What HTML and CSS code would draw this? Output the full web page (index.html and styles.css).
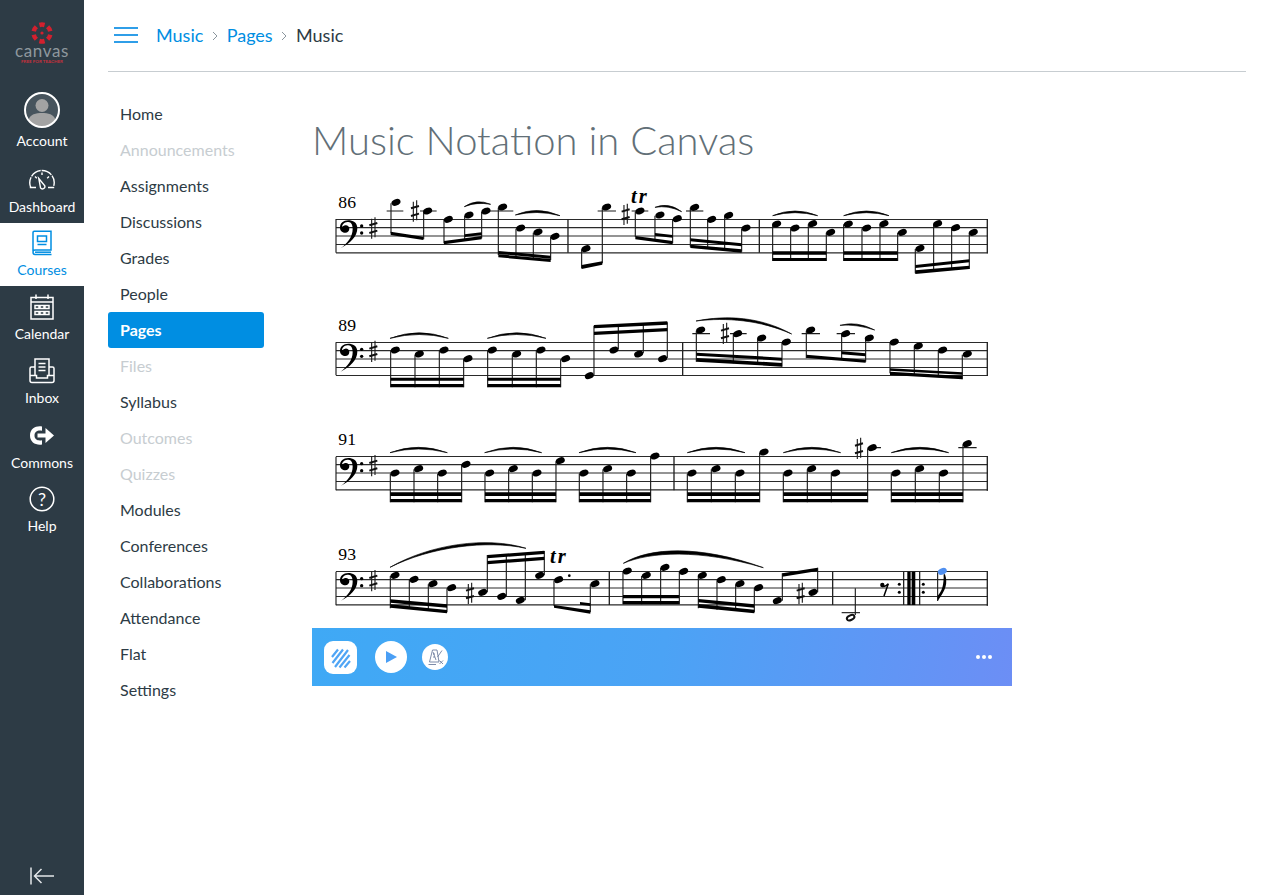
FILE: index.html
```html
<!DOCTYPE html>
<html lang="en">
<head>
  <meta charset="UTF-8">
  <title>Music Notation in Canvas</title>
  <link rel="stylesheet" href="styles.css">
</head>
<body>
  <div class="app">
    <nav class="global-nav">
      <div class="logo">
        <svg class="logo-mark" viewBox="-11 -11 22 22">
          <g fill="#d3202e">
            <circle r="1.6"/>
            <path id="logoPetal" d="M-3.2 -10.2A10.6 10.6 0 0 1 3.2 -10.2L2 -5.8A5 5 0 0 0 -2 -5.8Z"/>
            <use href="#logoPetal" transform="rotate(60)"/>
            <use href="#logoPetal" transform="rotate(120)"/>
            <use href="#logoPetal" transform="rotate(180)"/>
            <use href="#logoPetal" transform="rotate(240)"/>
            <use href="#logoPetal" transform="rotate(300)"/>
          </g>
        </svg>
        <div class="logo-word">canvas</div>
        <div class="logo-sub">FREE FOR TEACHER</div>
      </div>

      <a class="nav-item account">
        <svg class="avatar" viewBox="0 0 36 36">
          <circle cx="18" cy="18" r="17" fill="#47545d"/>
          <circle cx="18" cy="13.5" r="6.5" fill="#a3a3a3"/>
          <path d="M4.5 28C6 22 12 21 18 21S30 22 31.5 28A17 17 0 0 1 4.5 28Z" fill="#a3a3a3"/>
          <circle cx="18" cy="18" r="17" fill="none" stroke="#fff" stroke-width="2"/>
        </svg>
        <span>Account</span>
      </a>
      <a class="nav-item">
        <svg class="icon" viewBox="0 0 26 26" fill="none" stroke="#fff" stroke-width="1.4">
          <path d="M0.8 20.5H7M19 20.5H25.2"/>
          <path d="M1.8 20.5A12.2 12.2 0 1 1 24.2 20.5" stroke-dasharray="10.5 1 11 1 11 1 10.5"/>
          <path d="M6 9.5L7.8 11.2M13 5.5V8M20 9.5L18.2 11.2"/>
          <path d="M9.8 11.5L15.8 18.8A2.4 2.4 0 0 1 11.5 20.8Z"/>
        </svg>
        <span>Dashboard</span>
      </a>
      <a class="nav-item active">
        <svg class="icon" viewBox="0 0 26 26" fill="none" stroke="#008ee2" stroke-width="1.5">
          <path d="M4 21V2.5C4 1.8 4.5 1.3 5.2 1.3H22V20H6C4.8 20 4 20.6 4 22S4.8 24.5 6 24.5H22.5"/>
          <path d="M6 22.2H22"/>
          <path d="M8.5 6H17.5V11.5H8.5ZM8.5 14.5H17.5"/>
        </svg>
        <span>Courses</span>
      </a>
      <a class="nav-item">
        <svg class="icon" viewBox="0 0 26 26" fill="none" stroke="#fff" stroke-width="1.5">
          <path d="M2 3.5H24V25H2ZM2 8H24M7 0.5V5M19 0.5V5"/>
          <path d="M6 11.5H10V14.5H6ZM11 11.5H15V14.5H11ZM16 11.5H20V14.5H16ZM6 17.5H10V20.5H6ZM11 17.5H15V20.5H11ZM16 17.5H20V20.5H16Z"/>
        </svg>
        <span>Calendar</span>
      </a>
      <a class="nav-item">
        <svg class="icon" viewBox="0 0 26 26" fill="none" stroke="#fff" stroke-width="1.5">
          <path d="M6 17V1H20V17"/>
          <path d="M9.5 5.5H16.5M9.5 9H16.5M9.5 12.5H16.5"/>
          <path d="M6 9H2.5C1.5 9 1 9.8 1 10.5V22.5C1 23.8 2 24.5 3 24.5H23C24 24.5 25 23.8 25 22.5V10.5C25 9.8 24.5 9 23.5 9H20M1 17.5H7.5V20H18.5V17.5H25"/>
        </svg>
        <span>Inbox</span>
      </a>
      <a class="nav-item commons">
        <svg class="icon" viewBox="0 0 26 26" fill="#fff">
          <path d="M13 3.5C7 2.5 1 5.5 1 12.5S7 22.5 13 21.5V17.2C9 18.1 5.5 16.5 5.5 12.5S9 6.9 13 7.8Z"/>
          <path d="M8.5 10.4H16.5V5L25 12.5L16.5 20V14.6H8.5Z"/>
        </svg>
        <span>Commons</span>
      </a>
      <a class="nav-item">
        <svg class="icon" viewBox="0 0 26 26">
          <circle cx="13" cy="13" r="11.8" fill="none" stroke="#fff" stroke-width="1.5"/>
          <text class="help-mark" x="13" y="19.5">?</text>
        </svg>
        <span>Help</span>
      </a>

      <a class="collapse">
        <svg viewBox="0 0 26 20" width="26" height="20" fill="none" stroke="#e4e7e9" stroke-width="1.5">
          <path d="M2 1.5V18.5M25 10H5.5M12.5 3L5.5 10L12.5 17"/>
        </svg>
      </a>
    </nav>

    <div class="main">
      <header class="topbar">
        <div class="hamburger"><i></i><i></i><i></i></div>
        <a class="crumb">Music</a>
        <svg class="crumb-sep" viewBox="0 0 6 10" width="6" height="10"><path d="M1 1L5 5L1 9" fill="none" stroke="#8b969e"/></svg>
        <a class="crumb">Pages</a>
        <svg class="crumb-sep" viewBox="0 0 6 10" width="6" height="10"><path d="M1 1L5 5L1 9" fill="none" stroke="#8b969e"/></svg>
        <span class="crumb-current">Music</span>
      </header>

      <div class="body-row">
        <ul class="course-nav">
          <li>Home</li>
          <li class="off">Announcements</li>
          <li>Assignments</li>
          <li>Discussions</li>
          <li>Grades</li>
          <li>People</li>
          <li class="current">Pages</li>
          <li class="off">Files</li>
          <li>Syllabus</li>
          <li class="off">Outcomes</li>
          <li class="off">Quizzes</li>
          <li>Modules</li>
          <li>Conferences</li>
          <li>Collaborations</li>
          <li>Attendance</li>
          <li>Flat</li>
          <li>Settings</li>
        </ul>

        <main class="page">
          <h1 class="page-title">Music Notation in Canvas</h1>

          <svg class="score" viewBox="312 178 700 450" width="700" height="450">
            <defs>
              <ellipse id="n" rx="14" ry="9.5" transform="rotate(-22)"/>
              <g id="sh">
                <path class="st" d="M-5 -28V32M5 -32V28"/>
                <path class="thick" d="M-12 -8L12 -15M-12 15L12 8"/>
              </g>
              <g id="cl">
                <path d="M32 88C60 73 82 53 82 28C82 10 68 4 55 4C40 4 30 13 30 26C30 36 38 41 46 41C53 41 58 36 58 29C58 22 52 18 46 19C42 20 38 23 36 23C38 13 46 9 55 9C64 9 68 18 68 30C68 53 52 73 32 88Z"/>
                <circle cx="95" cy="21" r="5"/>
                <circle cx="95" cy="42" r="5"/>
                <use href="#sh" x="130" y="27"/>
              </g>
            </defs>

            <path class="lines" d="M336 219.5H988M336 227.7H988M336 236H988M336 244.5H988M336 252.8H988"/>
            <path class="lines" d="M336 342.5H988M336 350.7H988M336 359H988M336 367.5H988M336 375.5H988"/>
            <path class="lines" d="M336 456.5H988M336 464.7H988M336 473H988M336 481.5H988M336 489.8H988"/>
            <path class="lines" d="M336 571.5H988M336 579.7H988M336 588H988M336 596.5H988M336 604.8H988"/>

            <!-- bar 86 -->
            <g transform="translate(330 185) scale(.3333)">
              <text class="mm" x="25" y="68">86</text>
              <use href="#cl" y="102"/>
              <path class="st" d="M18 102V203M183 55V145M281 80V163M342 105V175M404 92V165M455 80V160M505 68V210M558 131V215M610 143V220M662 156V225M755 193V250M817 68V235M916 80V155M975 92V165M1028 103V175"/>
              <path class="st" d="M170 78H220M270 78H320M480 78H550M803 78H858M905 78H955"/>
              <path class="bar" d="M714 102V203"/>
              <path d="M182 140L280 155V165L182 150ZM342 168L455 153V163L342 178ZM404 148L455 142V150L404 156ZM505 198L662 212V221L505 207ZM505 208L662 222V231L505 217ZM755 240L817 229V239L755 252ZM916 153L1028 168V178L916 163ZM975 144L1028 150V158L975 152Z"/>
              <path class="slur" d="M403 65Q440 40 482 58Q440 50 403 65ZM556 90Q620 62 690 92Q620 74 556 90ZM975 67Q1015 50 1055 80Q1015 60 975 67Z"/>
              <use href="#n" x="198" y="52"/><use href="#n" x="293" y="78"/><use href="#n" x="355" y="103"/>
              <use href="#n" x="417" y="90"/><use href="#n" x="468" y="78"/><use href="#n" x="518" y="66"/>
              <use href="#n" x="572" y="129"/><use href="#n" x="624" y="141"/><use href="#n" x="675" y="154"/>
              <use href="#n" x="768" y="191"/><use href="#n" x="830" y="66"/><use href="#n" x="930" y="78"/><use href="#n" x="990" y="90"/>
              <use href="#sh" x="255" y="78"/><use href="#sh" x="887" y="88"/>
              <text class="tr" x="903" y="54">tr</text>
            </g>
            <g transform="translate(660 185) scale(.3333)">
              <path class="st" d="M91 68V185M143 105V190M194 92V195M245 131V200M338 118V228M392 130V228M445 118V228M499 143V228M551 118V228M606 130V228M660 118V228M713 143V228M766 192V265M821 118V258M875 130V255M928 144V252"/>
              <path class="st" d="M78 78H130"/>
              <path class="bar" d="M298 102V203"/><path class="bar" d="M982 102V205"/>
              <path d="M91 160L245 175V184L91 169ZM91 179L245 193V203L91 189ZM338 199H499V209H338ZM338 219H499V228H338ZM551 199H713V209H551ZM551 219H713V228H551ZM766 240L928 223V232L766 249ZM766 256L928 242V252L766 267Z"/>
              <path class="slur" d="M338 92Q405 64 473 92Q405 74 338 92ZM551 92Q620 64 687 92Q620 74 551 92Z"/>
              <use href="#n" x="52" y="101"/><use href="#n" x="104" y="67"/><use href="#n" x="155" y="103"/><use href="#n" x="206" y="91"/><use href="#n" x="258" y="129"/>
              <use href="#n" x="350" y="117"/><use href="#n" x="405" y="129"/><use href="#n" x="458" y="116"/><use href="#n" x="512" y="142"/>
              <use href="#n" x="565" y="117"/><use href="#n" x="620" y="129"/><use href="#n" x="672" y="116"/><use href="#n" x="727" y="142"/>
              <use href="#n" x="780" y="190"/><use href="#n" x="833" y="116"/><use href="#n" x="887" y="128"/><use href="#n" x="940" y="142"/>
            </g>

            <!-- bar 89 -->
            <g transform="translate(330 310) scale(.3333)">
              <text class="mm" x="25" y="62">89</text>
              <use href="#cl" y="97"/>
              <path class="st" d="M18 97V196M182 122V232M255 134V232M328 122V232M401 148V232M473 122V232M547 134V232M619 122V232M692 148V232M792 195V47M865 118V45M940 130V45M1012 144V37"/>
              <path d="M182 203H401V212H182ZM182 222H401V232H182ZM473 203H692V212H473ZM473 222H692V232H473ZM792 45L1012 34V44L792 55ZM792 65L1012 54V64L792 75Z"/>
              <path class="slur" d="M180 85Q268 52 355 85Q268 62 180 85ZM472 85Q560 52 648 85Q560 62 472 85Z"/>
              <use href="#n" x="196" y="120"/><use href="#n" x="268" y="132"/><use href="#n" x="342" y="120"/><use href="#n" x="414" y="146"/>
              <use href="#n" x="487" y="120"/><use href="#n" x="560" y="132"/><use href="#n" x="633" y="120"/><use href="#n" x="707" y="146"/>
              <use href="#n" x="778" y="197"/><use href="#n" x="852" y="120"/><use href="#n" x="926" y="132"/><use href="#n" x="998" y="146"/>
            </g>
            <g transform="translate(660 310) scale(.3333)">
              <path class="st" d="M109 62V155M220 73V160M293 86V165M366 98V170M439 62V145M545 73V150M617 86V155M690 98V190M763 110V195M835 122V200M907 134V208"/>
              <path class="st" d="M97 71H150M210 71H260M425 71H480M530 71H585"/>
              <path class="bar" d="M68 97V196"/><path class="bar" d="M982 97V197"/>
              <path d="M109 128L366 143V152L109 137ZM109 144L366 159V170L109 155ZM439 134L617 149V158L439 144ZM545 124L617 130V139L545 133ZM690 175L907 187V194L690 182ZM690 185L907 198V208L690 195Z"/>
              <path class="slur" d="M108 33C200 15 300 20 395 72C300 30 200 22 108 33ZM540 46Q590 32 644 60Q590 42 540 46Z"/>
              <use href="#n" x="122" y="60"/><use href="#n" x="233" y="71"/><use href="#n" x="305" y="84"/><use href="#n" x="379" y="96"/>
              <use href="#n" x="452" y="60"/><use href="#n" x="557" y="71"/><use href="#n" x="628" y="84"/>
              <use href="#n" x="703" y="96"/><use href="#n" x="775" y="108"/><use href="#n" x="848" y="120"/><use href="#n" x="922" y="132"/>
              <use href="#sh" x="195" y="70"/>
            </g>

            <!-- bar 91 -->
            <g transform="translate(330 430) scale(.3333)">
              <text class="mm" x="25" y="44">91</text>
              <use href="#cl" y="80"/>
              <path class="st" d="M18 80V181M181 131V217M252 118V217M323 131V217M395 105V217M465 131V217M536 118V217M607 131V217M678 94V217M748 131V217M819 118V217M890 131V217M962 80V217"/>
              <path d="M181 187H395V198H181ZM181 207H395V217H181ZM465 187H678V198H465ZM465 207H678V217H465ZM748 187H962V198H748ZM748 207H962V217H748Z"/>
              <path class="slur" d="M180 68Q265 36 352 68Q265 46 180 68ZM464 68Q550 36 635 68Q550 46 464 68ZM747 68Q833 36 918 68Q833 46 747 68Z"/>
              <use href="#n" x="195" y="129"/><use href="#n" x="266" y="116"/><use href="#n" x="337" y="129"/><use href="#n" x="408" y="103"/>
              <use href="#n" x="479" y="129"/><use href="#n" x="550" y="116"/><use href="#n" x="621" y="129"/><use href="#n" x="691" y="92"/>
              <use href="#n" x="762" y="129"/><use href="#n" x="833" y="116"/><use href="#n" x="904" y="129"/><use href="#n" x="975" y="78"/>
            </g>
            <g transform="translate(660 430) scale(.3333)">
              <path class="st" d="M82 131V217M154 118V217M226 131V217M299 68V217M370 131V217M442 118V217M514 131V217M623 55V217M694 131V217M766 118V217M838 131V217M909 43V217"/>
              <path class="st" d="M623 53H663M895 53H950"/>
              <path class="bar" d="M42 80V181"/><path class="bar" d="M982 80V182"/>
              <path d="M82 187H299V198H82ZM82 207H299V217H82ZM370 187H623V198H370ZM370 207H623V217H370ZM694 187H909V198H694ZM694 207H909V217H694Z"/>
              <path class="slur" d="M82 68Q168 36 255 68Q168 46 82 68ZM370 68Q455 36 542 68Q455 46 370 68ZM694 68Q780 36 866 68Q780 46 694 68Z"/>
              <use href="#n" x="96" y="129"/><use href="#n" x="168" y="116"/><use href="#n" x="240" y="129"/><use href="#n" x="312" y="66"/>
              <use href="#n" x="384" y="129"/><use href="#n" x="455" y="116"/><use href="#n" x="527" y="129"/><use href="#n" x="637" y="53"/>
              <use href="#n" x="708" y="129"/><use href="#n" x="779" y="116"/><use href="#n" x="851" y="129"/><use href="#n" x="922" y="41"/>
              <use href="#sh" x="597" y="55"/>
            </g>

            <!-- bar 93 -->
            <g transform="translate(330 535) scale(.3333)">
              <text class="mm" x="25" y="74">93</text>
              <use href="#cl" y="110"/>
              <path class="st" d="M18 110V211M181 123V220M238 135V222M295 148V226M351 160V232M472 172V60M529 184V60M586 196V58M643 121V48M672 136V212M781 148V232M879 110V208M935 123V208M992 99V208"/>
              <path class="bar" d="M838 110V210"/>
              <path d="M181 193L351 208V218L181 203ZM181 208L351 225V235L181 218ZM472 60L643 47V57L472 70ZM472 78L643 65V75L472 88ZM672 210L781 226V236L672 218ZM750 201L781 205V213L750 209ZM879 180H1048V190H879ZM879 198H1048V208H879Z"/>
              <path class="slur" d="M180 97C300 28 470 3 588 40C470 14 300 36 180 97Z"/>
              <use href="#n" x="195" y="121"/><use href="#n" x="252" y="133"/><use href="#n" x="309" y="146"/><use href="#n" x="365" y="158"/>
              <use href="#n" x="458" y="172"/><use href="#n" x="515" y="184"/><use href="#n" x="571" y="196"/><use href="#n" x="629" y="121"/>
              <use href="#n" x="686" y="134"/><use href="#n" x="795" y="146"/>
              <use href="#n" x="892" y="108"/><use href="#n" x="949" y="121"/><use href="#n" x="1005" y="97"/>
              <use href="#sh" x="420" y="175"/>
              <circle cx="718" cy="122" r="4"/>
              <text class="tr" x="660" y="84">tr</text>
            </g>
            <g transform="translate(660 535) scale(.3333)">
              <path class="st" d="M58 111V208M115 123V220M171 136V224M227 148V228M283 160V232M367 197V115M473 172V98M586 160V240"/>
              <path class="st" d="M545 233H600"/>
              <path class="bar" d="M518 110V210"/><path class="bar" d="M731 110V210"/><path class="bar" d="M779 110V210"/><path class="bar" d="M982 110V212"/>
              <path d="M742 110H752V210H742ZM755 110H766V210H755ZM115 192L283 208V218L115 202ZM115 207L283 224V235L115 218ZM367 115L473 98V108L367 125Z"/>
              <path class="slur" d="M-110 85C-30 36 120 30 310 98C120 42 -30 50 -110 85Z"/>
              <use href="#n" x="71" y="109"/><use href="#n" x="127" y="121"/><use href="#n" x="184" y="134"/><use href="#n" x="240" y="146"/><use href="#n" x="296" y="158"/>
              <use href="#n" x="352" y="197"/><use href="#n" x="459" y="172"/>
              <use href="#sh" x="422" y="175"/>
              <ellipse class="hollow" cx="572" cy="248" rx="12" ry="7" transform="rotate(-25 572 248)"/>
              <circle cx="667" cy="150" r="6.5"/>
              <path class="rest" d="M665 154Q678 156 685 146L672 183"/>
              <circle cx="718" cy="148" r="4.5"/><circle cx="718" cy="172" r="4.5"/>
              <circle cx="790" cy="148" r="4.5"/><circle cx="790" cy="172" r="4.5"/>
              <path class="st" d="M833 112V198"/>
              <path d="M855 118C864 145 858 165 833 198L833 182C846 170 852 150 851 118Z"/>
              <use class="played" href="#n" x="847" y="109"/>
            </g>
          </svg>

          <div class="player">
            <div class="flat-logo">
              <svg viewBox="0 0 33 33" width="33" height="33" fill="none" stroke="#4fa5f5" stroke-width="2.2">
                <path d="M8 16L14 8.5M8.5 22L19 8.5M11 26L24 9M15.5 26.5L25.5 14M20.5 26.5L26 20"/>
              </svg>
            </div>
            <button class="play-btn">
              <svg viewBox="0 0 32 32" width="32" height="32"><path d="M11 10L22 16L11 22Z" fill="#4a9ff5"/></svg>
            </button>
            <button class="metro-btn">
              <svg viewBox="0 0 26 26" width="26" height="26" fill="none" stroke="#6f7f9f" stroke-width=".9">
                <path d="M10.5 6H15L17 18H7.5ZM6.5 20.5H14M11 10H13M11 13H13M11 8L14 16M15.5 13L20 6.5M17.5 16.5L21 20M21 16.5L17.5 20"/>
              </svg>
            </button>
            <div class="more"><i></i><i></i><i></i></div>
          </div>
        </main>
      </div>
    </div>
  </div>
</body>
</html>
```

FILE: styles.css
```css
* {
  box-sizing: border-box;
}
body {
  margin: 0;
  font-family: Lato, "Open Sans", sans-serif;
  color: #2d3b45;
  background-color: #fff;
}
.app {
  display: flex;
  min-height: 895px;
}

/* dark column on the left */
.global-nav {
  width: 84px;
  flex-shrink: 0;
  height: 895px;
  background-color: #2d3b45;
  display: flex;
  flex-direction: column;
  color: #fff;
  font-size: 14px;
}
.logo {
  height: 84px;
  padding-top: 22px;
  display: flex;
  flex-direction: column;
  align-items: center;
}
.logo-mark {
  width: 22px;
  height: 22px;
}
.logo-word {
  font-size: 17px;
  line-height: 12px;
  letter-spacing: 0.6px;
  color: #8f989e;
  margin-top: 1px;
}
.logo-sub {
  font-size: 4.5px;
  line-height: 7px;
  margin-top: 1px;
  font-weight: 700;
  color: #c8303c;
  white-space: nowrap;
}
.nav-item {
  height: 63.8px;
  padding-top: 8px;
  display: flex;
  flex-direction: column;
  align-items: center;
  gap: 4px;
  line-height: 20px;
}
.nav-item.account {
  height: 75px;
  gap: 3px;
}
.nav-item.active {
  height: 63.4px;
  padding-top: 7.6px;
  background-color: #fff;
  color: #008ee2;
}
.nav-item.commons {
  padding-top: 9px;
}
.avatar {
  width: 36px;
  height: 36px;
}
.icon {
  width: 26px;
  height: 26px;
}
.help-mark {
  fill: #fff;
  font-family: Lato, sans-serif;
  font-size: 18px;
  text-anchor: middle;
}
.collapse {
  margin-top: auto;
  height: 30px;
  display: flex;
  justify-content: center;
  padding-top: 1px;
}

/* header and breadcrumbs */
.main {
  flex: 1;
  padding: 0 24px;
}
.topbar {
  height: 72px;
  border-bottom: 1px solid #c7cdd1;
  display: flex;
  align-items: center;
  font-size: 18px;
  padding: 0 0 1px 6px;
}
.hamburger {
  width: 24px;
  margin-right: 18px;
  display: flex;
  flex-direction: column;
  gap: 5px;
}
.hamburger i {
  height: 2px;
  background-color: #2f9ee8;
}
.crumb {
  color: #008ee2;
}
.crumb-sep {
  margin: 2px 8.7px 0;
}
.crumb-current {
  color: #2d3b45;
}

.body-row {
  display: flex;
  gap: 48px;
}

/* course menu */
.course-nav {
  list-style: none;
  margin: 24px 0 0;
  padding: 0;
  width: 156px;
  flex-shrink: 0;
  font-size: 16px;
}
.course-nav li {
  height: 36px;
  line-height: 36px;
  padding-left: 12px;
}
.course-nav .off {
  color: #c7cdd1;
}
.course-nav .current {
  background-color: #008ee2;
  color: #fff;
  font-weight: 700;
  border-radius: 3px;
}

/* page */
.page {
  width: 700px;
}
.page-title {
  margin: 45px 0 0;
  height: 61px;
  font-size: 40px;
  line-height: 46px;
  font-weight: 300;
  color: #626f77;
}
.score {
  display: block;
}
.score .lines {
  fill: none;
  stroke: #2a2a2a;
  stroke-width: 1.2;
}
.score .st {
  fill: none;
  stroke: #1c1c1c;
  stroke-width: 3.4;
}
.score .thick {
  fill: none;
  stroke: #111;
  stroke-width: 6;
}
.score .bar {
  fill: none;
  stroke: #222;
  stroke-width: 4;
}
.score .slur {
  stroke: #000;
  stroke-width: 2;
}
.score .rest {
  fill: none;
  stroke: #000;
  stroke-width: 4.5;
}
.score .mm {
  font-family: "Liberation Serif", serif;
  font-size: 53px;
}
.score .tr {
  font-family: "Liberation Serif", serif;
  font-size: 62px;
  font-weight: 700;
  font-style: italic;
  letter-spacing: 6px;
}
.score .hollow {
  fill: none;
  stroke: #111;
  stroke-width: 6;
}
.score .played {
  fill: #4f8ff0;
}

/* blue player bar */
.player {
  height: 58px;
  padding: 0 20px 0 12px;
  background: linear-gradient(100deg, #3fa9f5 0%, #4ba3f5 50%, #6c8ef5 100%);
  display: flex;
  align-items: center;
}
.flat-logo {
  width: 33px;
  height: 33px;
  border-radius: 9px;
  background-color: #fff;
}
.play-btn,
.metro-btn {
  padding: 0;
  border: 0;
  border-radius: 50%;
  background-color: #fff;
  display: flex;
  align-items: center;
  justify-content: center;
}
.play-btn {
  width: 32px;
  height: 32px;
  margin-left: 18px;
}
.metro-btn {
  width: 26px;
  height: 26px;
  margin-left: 15px;
}
.more {
  margin-left: auto;
  display: flex;
  gap: 2px;
}
.more i {
  width: 4px;
  height: 4px;
  border-radius: 50%;
  background-color: #fff;
}
```
